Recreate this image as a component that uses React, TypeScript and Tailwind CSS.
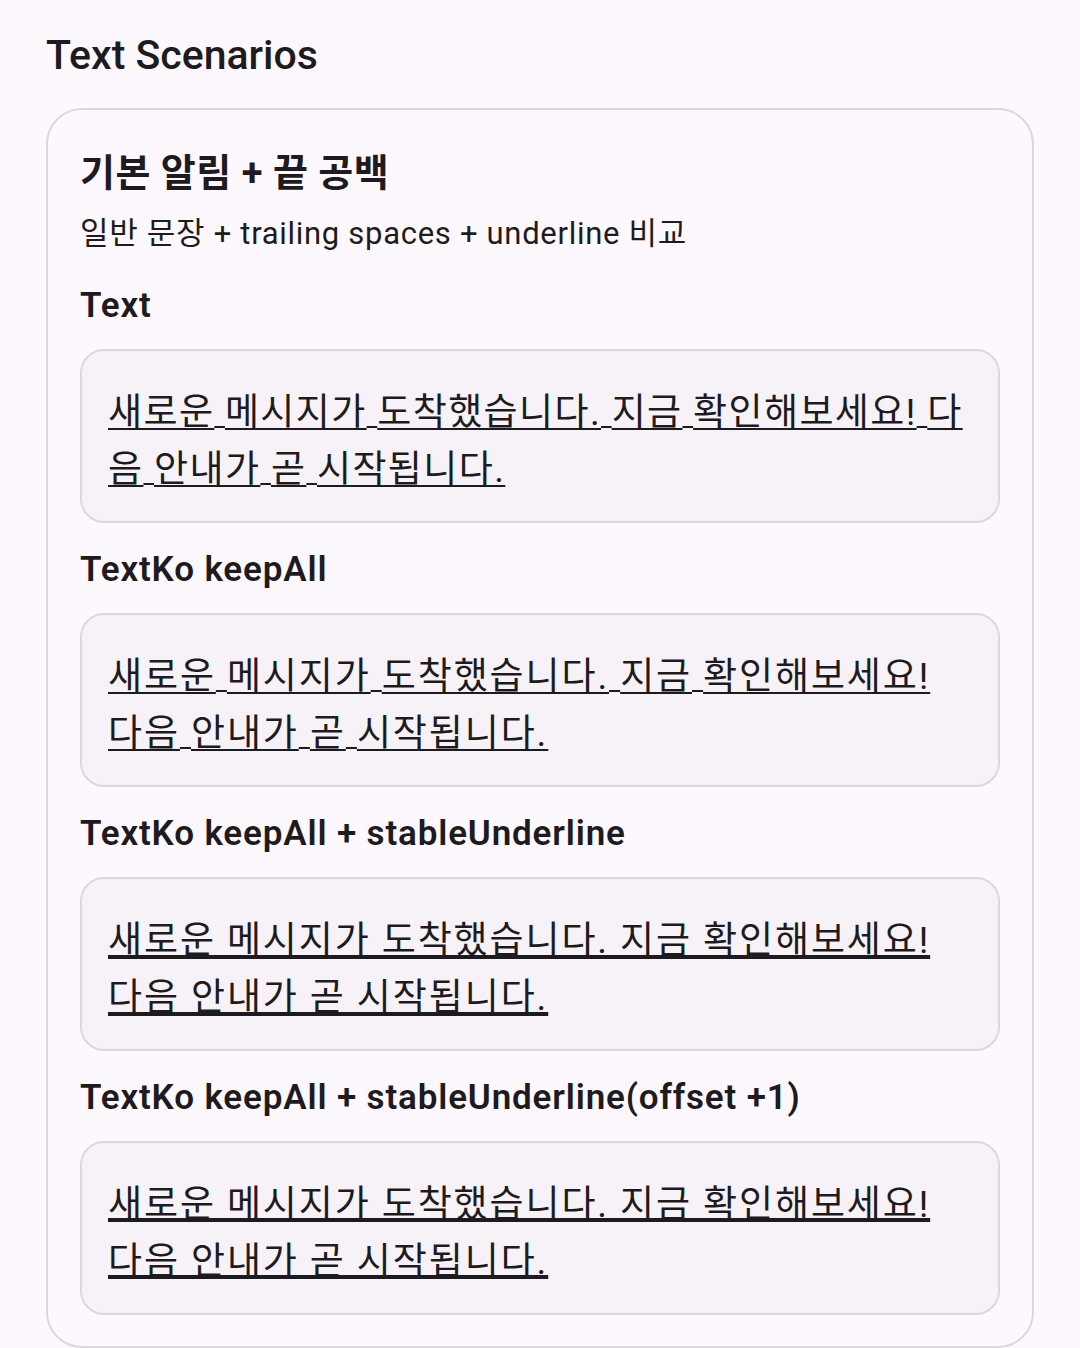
import React from "react";

const MESSAGE = "새로운 메시지가 도착했습니다. 지금 확인해보세요! 다음 안내가 곧 시작됩니다.";

// Android 기본 Text 밑줄처럼 공백 구간의 밑줄이 살짝 어긋나 보이도록 단어/공백을 나눠 그린다
const BrokenUnderline: React.FC<{ text: string }> = ({ text }) => {
  const parts = text.split(/( )/);
  return (
    <>
      {parts.map((part, i) =>
        part === " " ? (
          <span
            key={i}
            className="underline decoration-[1.5px] underline-offset-[1px]"
          >
            {" "}
          </span>
        ) : (
          <span
            key={i}
            className="underline decoration-[2px] underline-offset-[3px]"
          >
            {part}
          </span>
        )
      )}
    </>
  );
};

type Scenario = {
  label: string;
  keepAll: boolean;
  stable: boolean;
  offset?: number;
};

const scenarios: Scenario[] = [
  { label: "Text", keepAll: false, stable: false },
  { label: "TextKo keepAll", keepAll: true, stable: false },
  { label: "TextKo keepAll + stableUnderline", keepAll: true, stable: true },
  {
    label: "TextKo keepAll + stableUnderline(offset +1)",
    keepAll: true,
    stable: true,
    offset: 1,
  },
];

export default function App() {
  return (
    <div className="min-h-screen bg-[#fdf8fd] px-[46px] pt-[27px] text-[#1d1b20] font-['Roboto','Noto_Sans_CJK_KR',sans-serif]">
      <h1 className="text-[41px] leading-[56px] font-medium">Text Scenarios</h1>

      <div className="mt-[25px] rounded-[36px] border-2 border-[#ddd8df] px-[32px] pt-[37px] pb-[31px]">
        <h2 className="text-[38px] leading-[52px] font-bold tracking-[0.5px]">
          기본 알림 + 끝 공백
        </h2>
        <p className="mt-[13px] text-[31px] leading-[44px] tracking-[0.7px]">
          일반 문장 + trailing spaces + underline 비교
        </p>

        <div className="mt-[28px] flex flex-col gap-[25px]">
          {scenarios.map((s) => (
            <div key={s.label} className="flex flex-col gap-[21px]">
              <div className="text-[35px] leading-[44px] font-semibold tracking-[0.85px]">
                {s.label}
              </div>
              <div
                className={`rounded-[24px] border-2 border-[#dcd7dd] bg-[#f7f2f8] px-[26px] pt-[33px] pb-[23px] text-[37px] leading-[57px] ${
                  s.keepAll ? "break-keep tracking-[1.9px]" : "tracking-[1.4px]"
                }`}
              >
                {s.stable ? (
                  <span
                    className={`underline decoration-[3.5px] ${
                      s.offset ? "underline-offset-[1px]" : "underline-offset-[2px]"
                    }`}
                  >
                    {MESSAGE}
                  </span>
                ) : (
                  <BrokenUnderline text={MESSAGE} />
                )}
              </div>
            </div>
          ))}
        </div>
      </div>
    </div>
  );
}
